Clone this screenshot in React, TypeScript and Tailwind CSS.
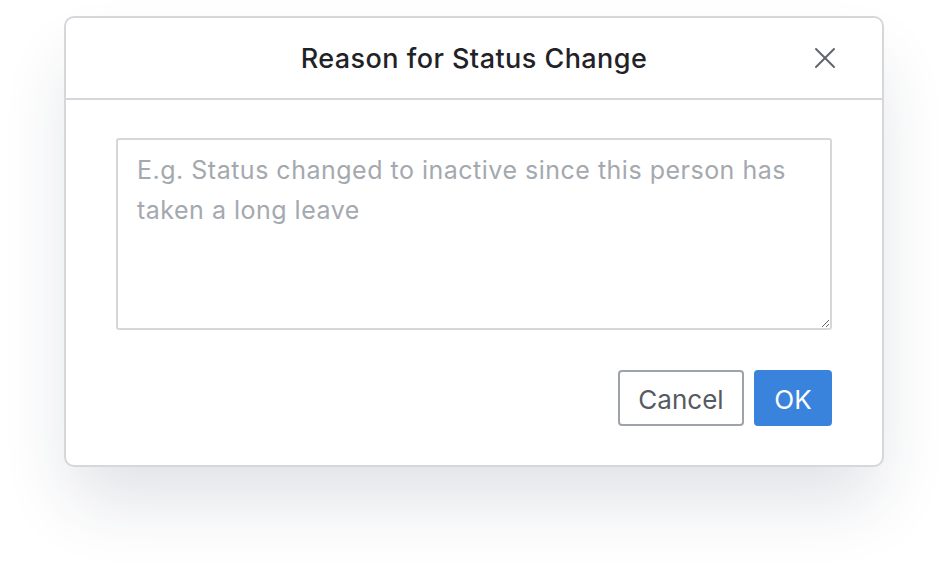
import { X } from "lucide-react";

export default function App() {
  return (
    <div className="w-[948px] h-[580px] bg-white pl-[64px] pt-[16px] font-['Inter',sans-serif]">
      <div className="w-[820px] rounded-[10px] border-2 border-[#d5d7db] bg-white shadow-[0_40px_70px_-8px_rgba(30,45,70,0.14)]">
        <div className="relative flex h-[82px] items-center justify-center border-b-2 border-[#d5d7db]">
          <h2 className="mt-[3px] text-[27px] font-medium tracking-[0.45px] text-[#1f2328]">Reason for Status Change</h2>
          <button className="absolute right-[39px] top-[22px] text-[#5f656c]">
            <X size={36} strokeWidth={1.3} />
          </button>
        </div>
        <div className="px-[50px] pt-[38px] pb-[39px]">
          <textarea
            className="block h-[192px] w-full resize-y rounded-[3px] border-2 border-[#d5d7db] px-[19px] py-[10px] font-['Inter',sans-serif] text-[25px] leading-[40px] tracking-[0.5px] text-[#374151] outline-none placeholder:text-[#a4a9af] placeholder:tracking-[0.5px]"
            placeholder="E.g. Status changed to inactive since this person has taken a long leave"
          />
          <div className="mt-[40px] flex justify-end gap-[10px]">
            <button className="h-[56px] w-[126px] rounded-[4px] border-2 border-[#9ea3a9] bg-white pt-[3px] text-[26px] text-[#555b62]">
              Cancel
            </button>
            <button className="h-[56px] w-[78px] rounded-[4px] bg-[#3a83dd] pt-[3px] text-[26px] text-white">
              OK
            </button>
          </div>
        </div>
      </div>
    </div>
  );
}
